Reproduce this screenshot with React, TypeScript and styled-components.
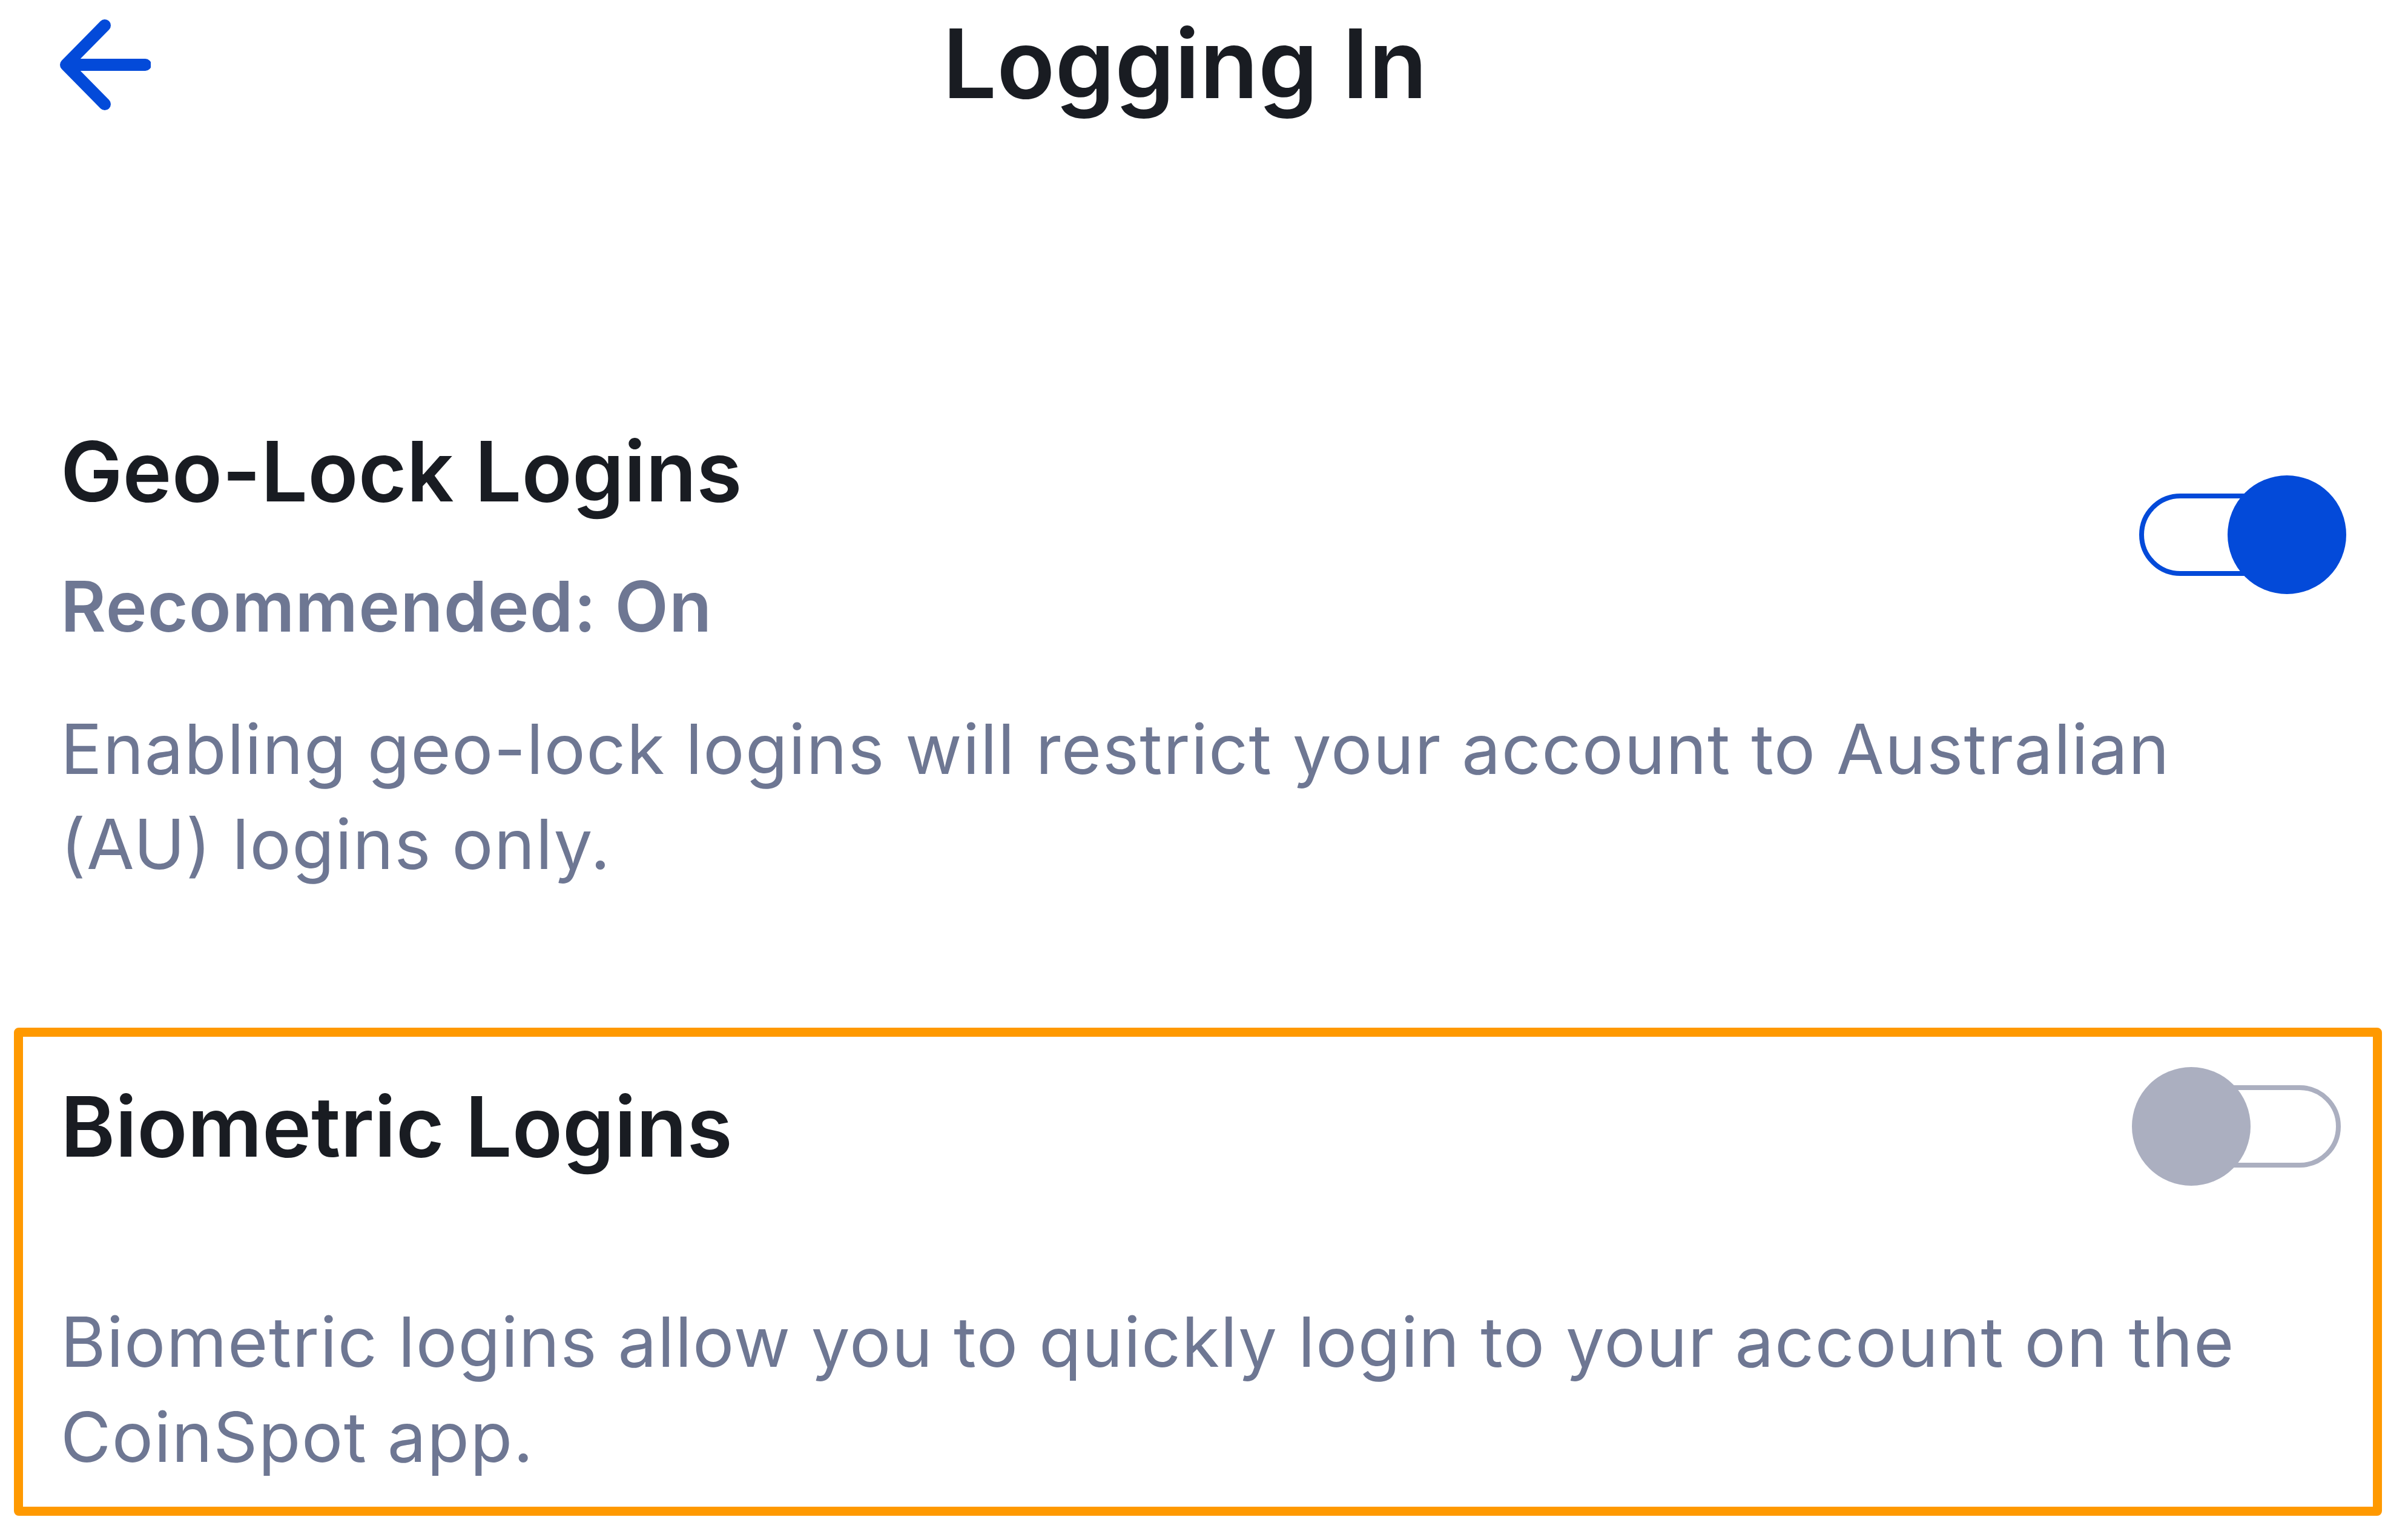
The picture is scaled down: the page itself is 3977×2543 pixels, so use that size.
import React from "react";
import styled, { createGlobalStyle } from "styled-components";

const GlobalStyle = createGlobalStyle`
  html, body {
    margin: 0;
    padding: 0;
    background: #ffffff;
  }
  body {
    font-family: Inter, "Noto Sans", "Liberation Sans", sans-serif;
    -webkit-font-smoothing: antialiased;
  }
  * { box-sizing: border-box; }
`;

const Page = styled.div`
  width: 3977px;
  min-height: 2543px;
  background: #ffffff;
`;

const Header = styled.header`
  display: grid;
  grid-template-columns: 1fr auto 1fr;
  align-items: center;
  height: 200px;
  padding: 10px 0 0 89px;
`;

const BackButton = styled.button`
  display: flex;
  align-items: center;
  justify-content: center;
  width: 160px;
  height: 160px;
  padding: 0;
  border: none;
  background: transparent;
  cursor: pointer;
  justify-self: start;
`;

const PageTitle = styled.h1<{ $shift: number }>`
  margin: 0 ${(p) => p.$shift}px 0 0;
  font-size: 158px;
  line-height: 190px;
  font-weight: 600;
  color: #191c22;
  white-space: nowrap;
`;

const Content = styled.main`
  padding: 496px 102px 0 100px;
  display: flex;
  flex-direction: column;
`;

const Section = styled.section`
  display: flex;
  flex-direction: column;
`;

const HighlightSection = styled(Section)`
  margin: 225px -59px 0 -77px;
  border: 15px solid #ff9900;
  border-radius: 8px;
  padding: 50px 44px 37px 62px;
`;

const SettingRow = styled.div`
  display: flex;
  align-items: center;
  justify-content: space-between;
`;

const TitleBlock = styled.div`
  display: flex;
  flex-direction: column;
`;

const SettingTitle = styled.h2`
  margin: 0;
  font-size: 137px;
  line-height: 164px;
  font-weight: 600;
  color: #191c22;
`;

const Recommendation = styled.div`
  margin-top: 74px;
  font-size: 115px;
  line-height: 136px;
  font-weight: 600;
  letter-spacing: 1.1px;
  color: #6e7793;
`;

const Description = styled.p<{ $gap: number }>`
  margin: ${(p) => p.$gap}px 0 0 0;
  padding-right: 100px;
  font-size: 114px;
  line-height: 157px;
  font-weight: 400;
  letter-spacing: 1.4px;
  color: #6e7793;
`;

const ToggleWrap = styled.div`
  position: relative;
  flex: none;
  width: 354px;
  height: 196px;
  display: flex;
  align-items: center;
  padding: 0 9px 0 12px;
  cursor: pointer;
`;

const Track = styled.div<{ $on: boolean }>`
  flex: 1;
  height: 136px;
  border: 8px solid ${(p) => (p.$on ? "#034ad9" : "#abafc0")};
  border-radius: 68px;
  background: #ffffff;
`;

const Knob = styled.div<{ $on: boolean }>`
  position: absolute;
  top: 0;
  ${(p) => (p.$on ? "right: 0;" : "left: 0;")}
  width: 196px;
  height: 196px;
  border-radius: 50%;
  background: ${(p) => (p.$on ? "#034ad9" : "#abafc0")};
`;

function Toggle({ on }: { on: boolean }) {
  return (
    <ToggleWrap role="switch" aria-checked={on}>
      <Track $on={on} />
      <Knob $on={on} />
    </ToggleWrap>
  );
}

function BackArrow() {
  return (
    <svg width="160" height="160" viewBox="0 0 160 160" fill="none">
      <path
        d="M84 17 L20 82 L84 147 M20 82 L151 82"
        stroke="#034ad9"
        strokeWidth="20"
        strokeLinecap="round"
        strokeLinejoin="round"
      />
    </svg>
  );
}

export default function App() {
  return (
    <Page>
      <GlobalStyle />
      <Header>
        <BackButton aria-label="Back">
          <BackArrow />
        </BackButton>
        <PageTitle $shift={152}>Logging In</PageTitle>
        <div />
      </Header>
      <Content>
        <Section>
          <SettingRow>
            <TitleBlock>
              <SettingTitle>Geo-Lock Logins</SettingTitle>
              <Recommendation>Recommended: On</Recommendation>
            </TitleBlock>
            <Toggle on={true} />
          </SettingRow>
          <Description $gap={88}>
            Enabling geo-lock logins will restrict your account to Australian (AU) logins only.
          </Description>
        </Section>
        <HighlightSection>
          <SettingRow>
            <SettingTitle>Biometric Logins</SettingTitle>
            <Toggle on={false} />
          </SettingRow>
          <Description $gap={179}>
            Biometric logins allow you to quickly login to your account on the CoinSpot app.
          </Description>
        </HighlightSection>
      </Content>
    </Page>
  );
}
